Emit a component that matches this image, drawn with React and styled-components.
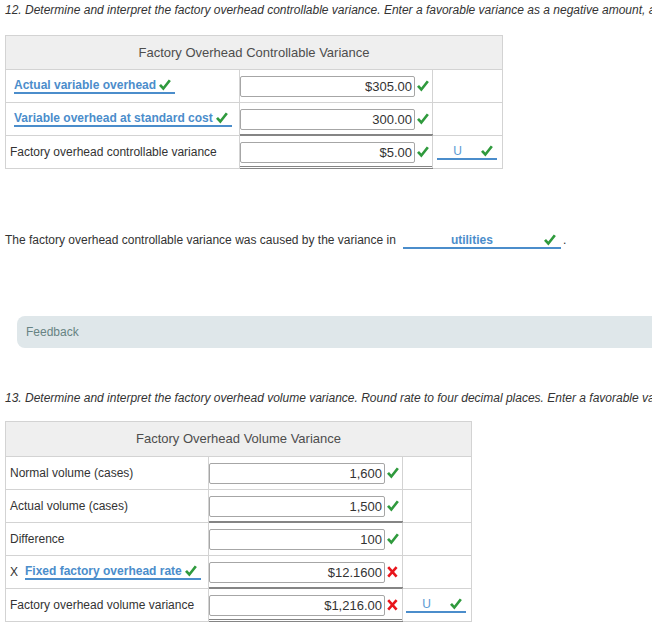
import React from "react";
import styled, { createGlobalStyle, css } from "styled-components";

const GlobalStyle = createGlobalStyle`
  *, *::before, *::after { box-sizing: border-box; }
  html, body { margin: 0; padding: 0; background: #fff; overflow-x: hidden; }
  body {
    font-family: "Liberation Sans", Arial, sans-serif;
    font-size: 12px;
    color: #333;
  }
`;

const BLUE = "#4b8dcb";
const GRID = "#d3d3d3";
const RULE = "#858585";

const Page = styled.div`
  padding: 3px 0 0 5px;
  width: 652px;
`;

const Question = styled.p`
  margin: ${(p) => p.$top}px 0 0;
  font-style: italic;
  font-size: 12px;
  line-height: 14px;
  white-space: nowrap;
  color: #333;
`;

const Table = styled.div`
  display: grid;
  grid-template-columns: ${(p) => p.$cols};
  width: max-content;
  margin-top: ${(p) => p.$top}px;
  border: 1px solid ${GRID};
`;

const HeaderCell = styled.div`
  grid-column: 1 / -1;
  height: ${(p) => p.$h}px;
  background: #efefef;
  display: flex;
  align-items: center;
  justify-content: center;
  padding-bottom: 1px;
  font-size: 13px;
  color: #4d4d4d;
`;

const Cell = styled.div`
  height: 33px;
  border-top: 1px solid ${GRID};
  border-right: ${(p) => (p.$divider ? `1px solid ${GRID}` : "none")};
  display: flex;
  align-items: center;
`;

const LabelCell = styled(Cell)`
  padding-left: 4px;
  white-space: nowrap;
`;

const InputCell = styled(Cell)`
  ${(p) =>
    p.$sum &&
    css`
      border-top-color: ${RULE};
    `}
  box-shadow: ${(p) =>
    [
      p.$sum ? `0 -1px 0 ${RULE}` : null,
      p.$total ? `inset 0 -1px 0 #fff, inset 0 -2px 0 ${RULE}, 0 1px 0 ${RULE}` : null,
    ]
      .filter(Boolean)
      .join(", ") || "none"};
`;

const ThirdCell = styled(Cell)`
  padding-left: ${(p) => p.$pad}px;
`;

const AmountBox = styled.input`
  width: ${(p) => p.$w}px;
  height: 21px;
  border: 1px solid #a6a6a6;
  border-radius: 2px;
  padding: 0 2px;
  margin: 0;
  text-align: right;
  font-family: "Liberation Sans", Arial, sans-serif;
  font-size: 13px;
  color: #333;
  background: #fff;
  outline: none;
`;

const Mark = styled.span`
  display: inline-flex;
  margin-left: 2px;
`;

const Select = styled.span`
  display: inline-flex;
  align-items: center;
  gap: 3px;
  line-height: 14px;
  border-bottom: 2px solid ${BLUE};
  padding-right: ${(p) => p.$padR ?? 4}px;
  margin-left: ${(p) => p.$ml ?? 0}px;
  width: ${(p) => (p.$w ? `${p.$w}px` : "auto")};
`;

const SelectValue = styled.span`
  color: ${(p) => (p.$light ? "#5b9ad3" : BLUE)};
  font-weight: ${(p) => (p.$light ? 400 : 700)};
  font-size: 12px;
  flex: ${(p) => (p.$center ? 1 : "none")};
  text-align: ${(p) => (p.$center ? "center" : "left")};
`;

const Multiply = styled.span`
  margin-right: 7px;
`;

const Sentence = styled.div`
  margin-top: 64px;
  height: 16px;
  line-height: 14px;
  white-space: nowrap;
`;

const Period = styled.span`
  margin-left: 2px;
`;

const Feedback = styled.div`
  margin: 67px 0 0 12px;
  width: 680px;
  height: 32px;
  border-radius: 8px;
  background: #dfe7ea;
  display: flex;
  align-items: center;
  padding-left: 9px;
  color: #678383;
  font-size: 12px;
`;

const Check = () => (
  <svg width="12" height="12" viewBox="0 0 12 12" aria-hidden="true">
    <path d="M0 6.8 L2 4.9 L4.3 7.4 L9.8 0.4 L11.9 2.1 L4.4 11.4 Z" fill="#2f9a3d" />
  </svg>
);

const Cross = () => (
  <svg width="11" height="12" viewBox="0 0 11 12" aria-hidden="true">
    <path d="M1.2 1.2 L9.6 10.6 M9.6 1.2 L1.2 10.6" stroke="#e8151c" strokeWidth="2.6" fill="none" />
  </svg>
);

const Amount = ({ value, w, ok }) => (
  <>
    <AmountBox readOnly value={value} $w={w} />
    <Mark>{ok ? <Check /> : <Cross />}</Mark>
  </>
);

const DropLabel = ({ children, ml = 4 }) => (
  <Select $ml={ml}>
    <SelectValue>{children}</SelectValue>
    <Check />
  </Select>
);

const UChoice = ({ w = 60 }) => (
  <Select $w={w} $padR={4}>
    <SelectValue $light $center>
      U
    </SelectValue>
    <Check />
  </Select>
);

export default function App() {
  return (
    <Page>
      <GlobalStyle />
      <Question $top={0}>
        12. Determine and interpret the factory overhead controllable variance. Enter a favorable variance as a
        negative amount, and an unfavorable variance as a positive amount.
      </Question>

      <Table $top={18} $cols="234px 193px 69px">
        <HeaderCell $h={33}>Factory Overhead Controllable Variance</HeaderCell>

        <LabelCell $divider>
          <DropLabel>Actual variable overhead</DropLabel>
        </LabelCell>
        <InputCell $divider>
          <Amount value="$305.00" w={175} ok />
        </InputCell>
        <ThirdCell $pad={4} />

        <LabelCell $divider>
          <DropLabel>Variable overhead at standard cost</DropLabel>
        </LabelCell>
        <InputCell $divider>
          <Amount value="300.00" w={175} ok />
        </InputCell>
        <ThirdCell $pad={4} />

        <LabelCell $divider>Factory overhead controllable variance</LabelCell>
        <InputCell $divider $sum $total>
          <Amount value="$5.00" w={175} ok />
        </InputCell>
        <ThirdCell $pad={4}>
          <UChoice w={60} />
        </ThirdCell>
      </Table>

      <Sentence>
        The factory overhead controllable variance was caused by the variance in
        <Select $w={158} $ml={7} $padR={5}>
          <SelectValue $center>utilities</SelectValue>
          <Check />
        </Select>
        <Period>.</Period>
      </Sentence>

      <Feedback>Feedback</Feedback>

      <Question $top={43}>
        13. Determine and interpret the factory overhead volume variance. Round rate to four decimal places. Enter a
        favorable variance as a negative amount, and an unfavorable variance as a positive amount.
      </Question>

      <Table $top={16} $cols="203px 194px 68px">
        <HeaderCell $h={34}>Factory Overhead Volume Variance</HeaderCell>

        <LabelCell $divider>Normal volume (cases)</LabelCell>
        <InputCell $divider>
          <Amount value="1,600" w={176} ok />
        </InputCell>
        <ThirdCell $pad={3} />

        <LabelCell $divider>Actual volume (cases)</LabelCell>
        <InputCell $divider>
          <Amount value="1,500" w={176} ok />
        </InputCell>
        <ThirdCell $pad={3} />

        <LabelCell $divider>Difference</LabelCell>
        <InputCell $divider $sum>
          <Amount value="100" w={176} ok />
        </InputCell>
        <ThirdCell $pad={3} />

        <LabelCell $divider>
          <Multiply>X</Multiply>
          <DropLabel ml={0}>Fixed factory overhead rate</DropLabel>
        </LabelCell>
        <InputCell $divider>
          <Amount value="$12.1600" w={176} ok={false} />
        </InputCell>
        <ThirdCell $pad={3} />

        <LabelCell $divider>Factory overhead volume variance</LabelCell>
        <InputCell $divider $sum $total>
          <Amount value="$1,216.00" w={176} ok={false} />
        </InputCell>
        <ThirdCell $pad={3}>
          <UChoice w={60} />
        </ThirdCell>
      </Table>
    </Page>
  );
}
